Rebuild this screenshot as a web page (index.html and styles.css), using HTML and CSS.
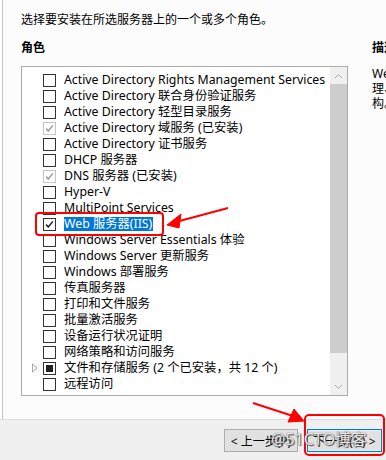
FILE: index.html
```html
<!DOCTYPE html>
<html lang="zh-CN">
<head>
  <meta charset="UTF-8">
  <title>选择服务器角色</title>
  <link rel="stylesheet" href="styles.css">
</head>
<body>
  <div class="page">
    <div class="main">
      <div class="left">
        <p class="intro">选择要安装在所选服务器上的一个或多个角色。</p>
        <h3 class="label">角色</h3>
        <div class="listbox">
          <ul class="roles">
            <li><span class="exp"></span><span class="box"></span><span class="txt">Active Directory Rights Management Services</span></li>
            <li><span class="exp"></span><span class="box"></span><span class="txt">Active Directory 联合身份验证服务</span></li>
            <li><span class="exp"></span><span class="box"></span><span class="txt">Active Directory 轻型目录服务</span></li>
            <li><span class="exp"></span><span class="box installed"><svg viewBox="0 0 13 13"><path d="M2.5 6.5 L5 9.5 L10.5 2.8" /></svg></span><span class="txt">Active Directory 域服务 (已安装)</span></li>
            <li><span class="exp"></span><span class="box"></span><span class="txt">Active Directory 证书服务</span></li>
            <li><span class="exp"></span><span class="box"></span><span class="txt">DHCP 服务器</span></li>
            <li><span class="exp"></span><span class="box installed"><svg viewBox="0 0 13 13"><path d="M2.5 6.5 L5 9.5 L10.5 2.8" /></svg></span><span class="txt">DNS 服务器 (已安装)</span></li>
            <li><span class="exp"></span><span class="box"></span><span class="txt">Hyper-V</span></li>
            <li><span class="exp"></span><span class="box"></span><span class="txt">MultiPoint Services</span></li>
            <li><span class="exp"></span><span class="box checked"><svg viewBox="0 0 13 13"><path d="M2.5 6.5 L5 9.5 L10.5 2.8" /></svg></span><span class="txt selected">Web 服务器(IIS)</span></li>
            <li><span class="exp"></span><span class="box"></span><span class="txt">Windows Server Essentials 体验</span></li>
            <li><span class="exp"></span><span class="box"></span><span class="txt">Windows Server 更新服务</span></li>
            <li><span class="exp"></span><span class="box"></span><span class="txt">Windows 部署服务</span></li>
            <li><span class="exp"></span><span class="box"></span><span class="txt">传真服务器</span></li>
            <li><span class="exp"></span><span class="box"></span><span class="txt">打印和文件服务</span></li>
            <li><span class="exp"></span><span class="box"></span><span class="txt">批量激活服务</span></li>
            <li><span class="exp"></span><span class="box"></span><span class="txt">设备运行状况证明</span></li>
            <li><span class="exp"></span><span class="box"></span><span class="txt">网络策略和访问服务</span></li>
            <li><span class="exp"><svg viewBox="0 0 8 10"><path d="M1.5 1 L6 5 L1.5 9 Z" /></svg></span><span class="box partial"><i></i></span><span class="txt">文件和存储服务 (2 个已安装，共 12 个)</span></li>
            <li><span class="exp"></span><span class="box"></span><span class="txt">远程访问</span></li>
          </ul>
          <div class="scrollbar">
            <div class="arrow"><svg viewBox="0 0 9 6"><path d="M1 5 L4.5 1.5 L8 5" /></svg></div>
            <div class="thumb"></div>
            <div class="track"></div>
            <div class="arrow"><svg viewBox="0 0 9 6"><path d="M1 1 L4.5 4.5 L8 1" /></svg></div>
          </div>
        </div>
      </div>
      <div class="right">
        <h3 class="label">描述</h3>
        <p class="desc">Web 服务器(IIS)提供可靠、可管<br>理、可扩展的 Web 应用程序基础结<br>构。</p>
      </div>
    </div>
    <div class="footer">
      <button class="btn">&lt; 上一步(P)</button>
      <button class="btn primary">下一步(N) &gt;</button>
    </div>
  </div>

  <!-- 标注层 -->
  <svg class="marks" viewBox="0 0 386 460">
    <rect x="36" y="213" width="127" height="22" rx="3" />
    <rect x="305" y="415" width="79" height="40" rx="4" />
    <path d="M228 208 L172 223" />
    <path d="M167 225 L181 214 L179 228 Z" class="head" />
    <path d="M253 403 L299 418" />
    <path d="M304 421 L288 422 L294 409 Z" class="head" />
  </svg>
  <span class="watermark">@51CTO博客</span>
</body>
</html>
```

FILE: styles.css
```css
body {
  margin: 0;
  font-family: 'Noto Sans', 'Noto Sans CJK SC', sans-serif;
  font-size: 12px;
  color: #000;
  background-color: #fff;
  overflow: hidden;
}
.page {
  width: 386px;
  height: 460px;
  display: flex;
  flex-direction: column;
}
.main {
  flex: 1;
  display: flex;
  gap: 24px;
  margin-left: 2px;
  padding-left: 18px;
  border-left: 1px solid #c4c4c4;
  background-color: #fcfcfc;
  overflow: hidden;
}
.left {
  width: 327px;
  flex-shrink: 0;
}
.intro {
  margin: 12px 0 0;
  line-height: 16px;
}
.label {
  margin: 12px 0 0;
  font-size: 12px;
  font-weight: bold;
  line-height: 16px;
}
.listbox {
  margin-top: 10px;
  height: 328px;
  border: 1px solid #acacac;
  background-color: #fff;
  display: flex;
}
.roles {
  flex: 1;
  list-style: none;
  margin: 0;
  padding: 5px 0 0;
  font-size: 12.3px;
}
.roles li {
  height: 16px;
  display: flex;
  align-items: center;
  white-space: nowrap;
}
.exp {
  width: 21px;
  height: 16px;
  display: flex;
  align-items: center;
  justify-content: flex-end;
  padding-right: 4px;
  box-sizing: border-box;
}
.exp svg {
  width: 8px;
  height: 10px;
  fill: none;
  stroke: #a6a6a6;
}
.box {
  width: 13px;
  height: 13px;
  box-sizing: border-box;
  border: 1px solid #333;
  background-color: #fff;
  margin-right: 8px;
  display: flex;
  align-items: center;
  justify-content: center;
}
.box svg {
  width: 11px;
  height: 11px;
  fill: none;
  stroke-width: 1.8;
}
.box.installed {
  border-color: #c4c4c4;
}
.box.installed svg {
  stroke: #9c9c9c;
}
.box.checked svg {
  stroke: #222;
}
.box.partial i {
  width: 7px;
  height: 7px;
  background-color: #222;
}
.txt {
  line-height: 14px;
  padding-right: 1px;
}
.txt.selected {
  background-color: #0078d7;
  color: #fff;
}
.scrollbar {
  width: 17px;
  background-color: #f0f0f0;
  display: flex;
  flex-direction: column;
}
.scrollbar .arrow {
  height: 17px;
  display: flex;
  align-items: center;
  justify-content: center;
}
.scrollbar .arrow svg {
  width: 9px;
  height: 6px;
  fill: none;
  stroke: #a6a6a6;
}
.thumb {
  height: 269px;
  background-color: #cdcdcd;
}
.track {
  flex: 1;
}
.right {
  width: 60px;
  flex-shrink: 0;
  padding-top: 28px;
}
.desc {
  margin: 10px 0 0;
  line-height: 15px;
  white-space: nowrap;
}
.footer {
  height: 41px;
  border-top: 1px solid #dcdcdc;
  background-color: #f0f0f0;
  display: flex;
  justify-content: flex-end;
  align-items: flex-start;
  gap: 9px;
  padding: 9px 4px 0 0;
  box-sizing: border-box;
}
.btn {
  height: 23px;
  width: 74px;
  padding: 0;
  font-family: inherit;
  font-size: 12px;
  background-color: #e1e1e1;
  border: 1px solid #adadad;
  color: #000;
}
.btn.primary {
  width: 75px;
  border-color: #0078d7;
  box-shadow: inset 0 0 0 1px #e5f1fb;
}
.marks {
  position: absolute;
  left: 0;
  top: 0;
  width: 386px;
  height: 460px;
  pointer-events: none;
}
.marks rect, .marks path {
  fill: none;
  stroke: #f00;
  stroke-width: 2;
}
.marks path.head {
  fill: #f00;
  stroke-width: 1;
}
.watermark {
  position: absolute;
  left: 271px;
  top: 430px;
  font-size: 16px;
  line-height: 19px;
  color: rgba(255, 255, 255, 0.9);
  text-shadow: 0 0 1px #333, 1px 1px 1px #555;
}
```
